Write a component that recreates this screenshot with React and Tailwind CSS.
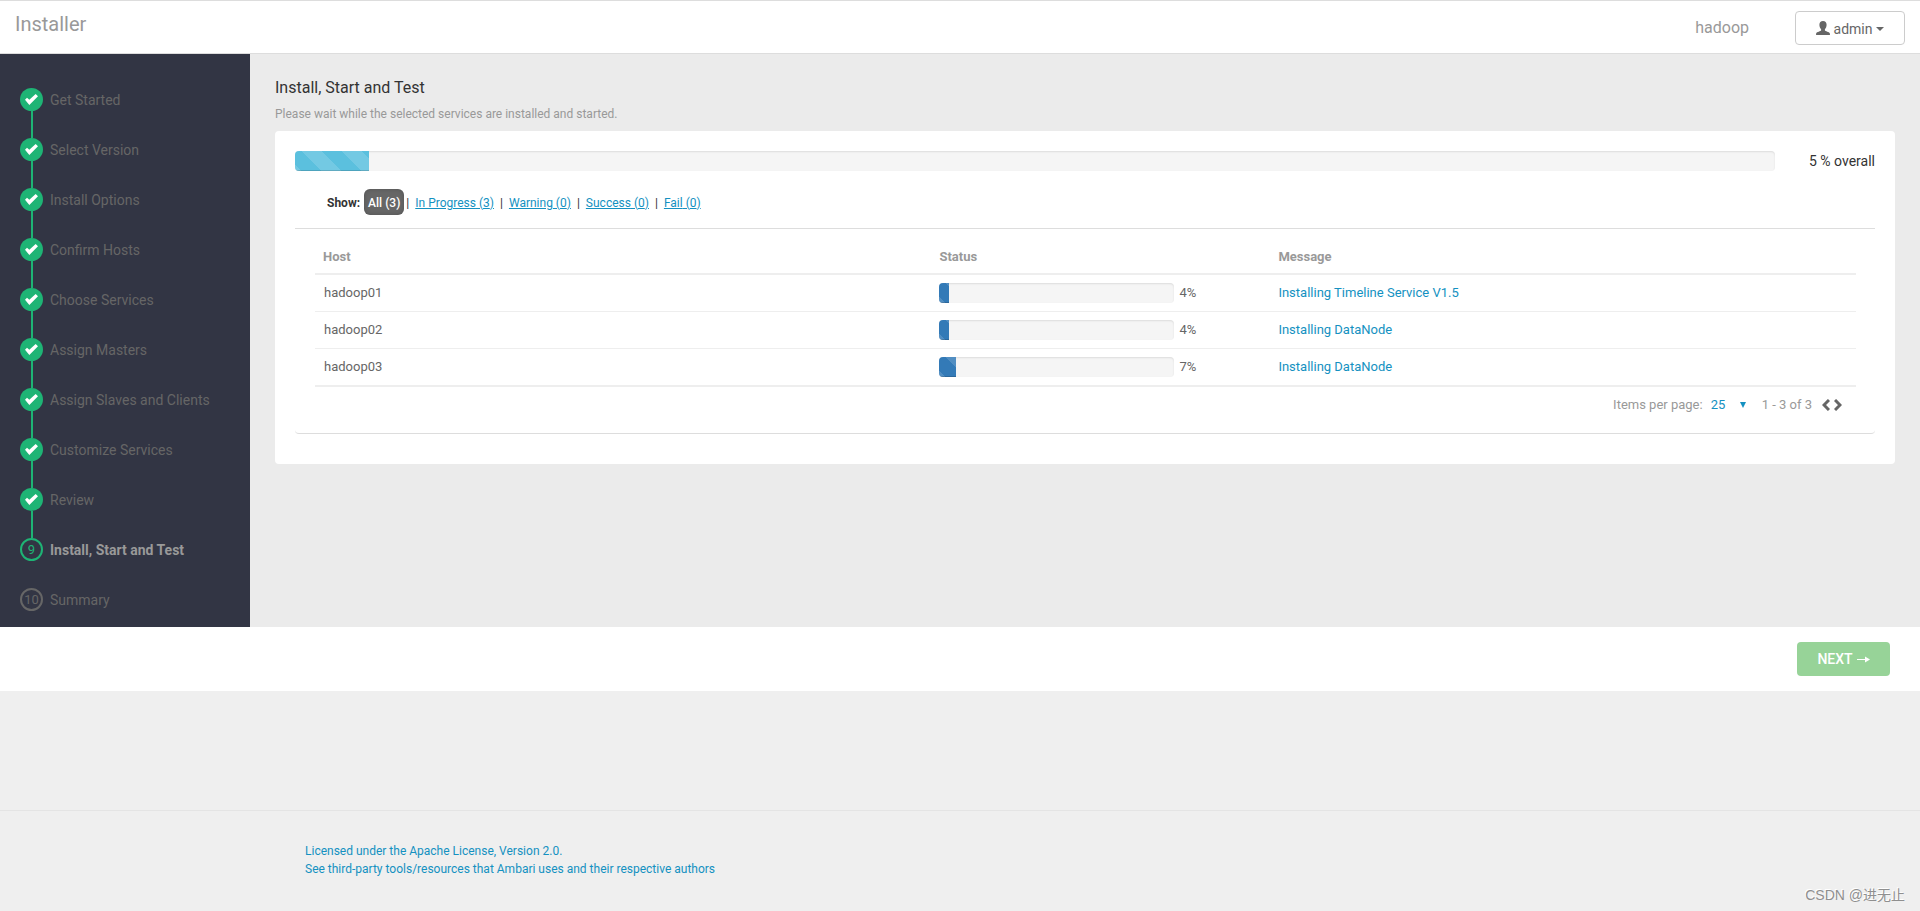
import { useState } from 'react';

const steps = [
  'Get Started',
  'Select Version',
  'Install Options',
  'Confirm Hosts',
  'Choose Services',
  'Assign Masters',
  'Assign Slaves and Clients',
  'Customize Services',
  'Review',
  'Install, Start and Test',
  'Summary',
];
const currentStep = 9;

const hosts = [
  { name: 'hadoop01', progress: 4, message: 'Installing Timeline Service V1.5' },
  { name: 'hadoop02', progress: 4, message: 'Installing DataNode' },
  { name: 'hadoop03', progress: 7, message: 'Installing DataNode' },
];

const filters = [
  { label: 'All', count: 3 },
  { label: 'In Progress', count: 3 },
  { label: 'Warning', count: 0 },
  { label: 'Success', count: 0 },
  { label: 'Fail', count: 0 },
];

const IconCheck = ({ className }) => (
  <svg className={className} viewBox="0 0 39 33" fill="currentColor" aria-hidden="true">
    <path d="M0 17 L6 11 L13 17 L32 0 L39 7 L13 33 Z" />
  </svg>
);

const IconUser = ({ className }) => (
  <svg className={className} viewBox="0 0 14 14" fill="currentColor" aria-hidden="true">
    <path d="M7 0C9.3 0 10.6 1.5 10.6 3.8 10.6 5.6 10 7.2 8.9 8.2V9.6C9.2 10.3 13.2 11 13.8 12.3L14 14H0L.2 12.3C.8 11 4.8 10.3 5.1 9.6V8.2C4 7.2 3.4 5.6 3.4 3.8 3.4 1.5 4.7 0 7 0Z" />
  </svg>
);

const IconChevron = ({ className }) => (
  <svg className={className} viewBox="0 0 8 12" fill="none" stroke="currentColor" strokeWidth="3" aria-hidden="true">
    <path d="M7 1 L2 6 L7 11" />
  </svg>
);

const ProgressBar = ({ value, label, barClass }) => (
  <div
    role="progressbar"
    aria-label={label}
    aria-valuenow={value}
    aria-valuemin={0}
    aria-valuemax={100}
    className="grow h-5 overflow-hidden rounded bg-[#f5f5f5] shadow-[inset_0_1px_2px_rgba(0,0,0,0.1)]"
  >
    <div
      className={`h-full bg-[linear-gradient(45deg,rgba(255,255,255,.15)_25%,transparent_25%,transparent_50%,rgba(255,255,255,.15)_50%,rgba(255,255,255,.15)_75%,transparent_75%,transparent)] bg-[length:40px_40px] bg-[position:7px_0] shadow-[inset_0_-1px_0_rgba(0,0,0,0.15)] ${barClass}`}
      style={{ width: `${value}%` }}
    />
  </div>
);

const Header = () => (
  <header className="h-[54px] border-y border-[#ddd] bg-white flex items-start justify-between px-[15px]">
    <h1 className="pt-2 text-xl leading-[30px] text-[#999]">Installer</h1>
    <div className="flex items-center pt-[10px]">
      <span className="mr-[46px] text-base text-[#999]">hadoop</span>
      <button className="w-[110px] h-[34px] rounded border border-[#ccc] bg-white flex items-center justify-center text-sm text-[#666]">
        <IconUser className="w-[14px] h-[14px] mr-1" />
        <span className="pt-[2px]">admin</span>
        <span className="mt-[2px] ml-1 border-x-4 border-t-4 border-x-transparent border-t-[#666]" />
      </button>
    </div>
  </header>
);

const StepMarker = ({ index }) => {
  if (index < currentStep) {
    return (
      <span className="w-[23px] h-[23px] rounded-full bg-[#1eb475] text-white flex items-center justify-center">
        <IconCheck className="w-[13px] h-[11px]" />
      </span>
    );
  }
  return (
    <span
      className={`w-[23px] h-[23px] rounded-full border-2 flex items-center justify-center text-[13px] ${
        index === currentStep ? 'border-[#1eb475] text-[#1eb475]' : 'border-[#666] text-[#666]'
      }`}
    >
      {index}
    </span>
  );
};

const Sidebar = () => (
  <nav className="w-[250px] shrink-0 bg-[#323544] pl-5 pt-[34px] pb-[15px]">
    <ol>
      {steps.map((step, index) => (
        <li key={step} className="flex gap-[7px]">
          <div className="flex flex-col items-center">
            <StepMarker index={index} />
            {index < steps.length - 1 && (
              <span className={`w-[2px] h-[27px] ${index < currentStep ? 'bg-[#1eb475]' : ''}`} />
            )}
          </div>
          <a
            href="#"
            className={`text-sm leading-6 h-6 ${index === currentStep ? 'font-bold text-[#999]' : 'text-[#666]'}`}
          >
            {step}
          </a>
        </li>
      ))}
    </ol>
  </nav>
);

const FilterBar = () => {
  const [active, setActive] = useState('All');

  return (
    <div className="mt-[18px] ml-8 flex items-center text-xs leading-[18px] h-[26px]">
      <span className="mr-1 pt-[2px] font-bold text-[#333]">Show:</span>
      {filters.map(({ label, count }, index) => (
        <span key={label} className="flex items-center">
          {index > 0 && (
            <span className={`mr-[6px] pt-[2px] text-[#333] ${index > 1 ? 'ml-[6px]' : 'ml-[2px]'}`}>|</span>
          )}
          <button
            className={
              active === label
                ? 'h-[26px] px-1 pt-[2px] rounded-md bg-[#666] text-white font-medium shadow-[inset_0_0_4px_rgba(0,0,0,0.2)]'
                : 'pt-[2px] text-[#1491c1] underline'
            }
            onClick={() => setActive(label)}
          >
            {label} ({count})
          </button>
        </span>
      ))}
    </div>
  );
};

const HostTable = () => (
  <table className="w-full table-fixed text-[13px] leading-5 text-left">
    <thead>
      <tr className="border-b-2 border-[#eee] text-[#999]">
        <th className="w-[40%] px-2 pt-[9px] pb-[6px] font-bold">Host</th>
        <th className="w-[22%] px-2 pt-[9px] pb-[6px] font-bold">Status</th>
        <th className="px-2 pt-[9px] pb-[6px] font-bold">Message</th>
      </tr>
    </thead>
    <tbody className="border-b-2 border-[#eee]">
      {hosts.map((host, index) => (
        <tr key={host.name} className={index > 0 ? 'border-t border-[#eee]' : ''}>
          <td className="px-[9px] py-2 text-[#666]">{host.name}</td>
          <td className="px-2 py-2 text-[#666]">
            <div className="flex items-center">
              <ProgressBar value={host.progress} label={host.name} barClass="bg-[#337ab7]" />
              <span className="w-[88px] pl-[5px]">{host.progress}%</span>
            </div>
          </td>
          <td className="px-2 py-2">
            <a href="#" className="text-[#1491c1]">
              {host.message}
            </a>
          </td>
        </tr>
      ))}
    </tbody>
  </table>
);

const Pagination = () => (
  <div className="flex items-center justify-end pr-[14px] h-9 text-[13px] text-[#999]">
    <label htmlFor="page-size">Items per page:</label>
    <div className="relative ml-2">
      <select id="page-size" defaultValue="25" className="w-[35px] appearance-none bg-transparent text-[#1491c1]">
        <option>10</option>
        <option>25</option>
        <option>50</option>
      </select>
      <span className="pointer-events-none absolute right-0 top-[7px] border-x-[3px] border-t-[6px] border-x-transparent border-t-[#1491c1]" />
    </div>
    <span className="ml-4">1 - 3 of 3</span>
    <button className="ml-[10px] text-[#666]" aria-label="Previous page">
      <IconChevron className="w-2 h-3" />
    </button>
    <button className="ml-1 text-[#666]" aria-label="Next page">
      <IconChevron className="w-2 h-3 rotate-180" />
    </button>
  </div>
);

const App = () => (
  <div className="relative min-h-screen bg-[#efefef] font-[Roboto,'Noto_Sans_CJK_SC',sans-serif] flex flex-col">
    <Header />
    <div className="flex">
      <Sidebar />
      <main className="grow bg-[#ebebeb] px-[25px] pt-[23px]">
        <h2 className="text-base leading-[22px] text-[#333]">Install, Start and Test</h2>
        <p className="mt-[6px] text-xs leading-[18px] text-[#999]">
          Please wait while the selected services are installed and started.
        </p>
        <section className="mt-2 rounded bg-white px-5 pt-5 pb-[30px]">
          <div className="flex items-center">
            <ProgressBar value={5} label="Overall progress" barClass="bg-[#5bc0de]" />
            <p className="w-[100px] text-right text-sm text-[#333]">5 % overall</p>
          </div>
          <FilterBar />
          <div className="mt-[13px] border-y border-[#ddd] rounded-b pl-5 pr-[19px] pt-[9px] pb-[10px]">
            <HostTable />
            <Pagination />
          </div>
        </section>
      </main>
    </div>
    <div className="h-16 bg-white flex items-center justify-end pr-[30px]">
      <button
        disabled
        className="w-[93px] h-[34px] rounded bg-[#97d398] text-white text-sm font-medium flex items-center justify-center gap-1"
      >
        NEXT
        <svg className="w-[13px] h-[7px]" viewBox="0 0 13 7" fill="currentColor" aria-hidden="true">
          <path d="M0 3H8V0.5L13 3.5L8 6.5V4H0Z" />
        </svg>
      </button>
    </div>
    <footer className="mt-[119px] grow border-t border-[#e4e4e4] pt-[31px] pl-[305px] text-xs leading-[18px]">
      <a href="#" className="block w-fit text-[#1491c1]">
        Licensed under the Apache License, Version 2.0.
      </a>
      <a href="#" className="block w-fit text-[#1491c1]">
        See third-party tools/resources that Ambari uses and their respective authors
      </a>
    </footer>
    <span className="absolute right-[15px] bottom-[6px] text-sm text-[#8f8f8f] font-['Liberation_Sans','Noto_Sans_CJK_SC',sans-serif] [text-shadow:-1px_-1px_0_#fff]">
      CSDN @进无止
    </span>
  </div>
);

export default App;
